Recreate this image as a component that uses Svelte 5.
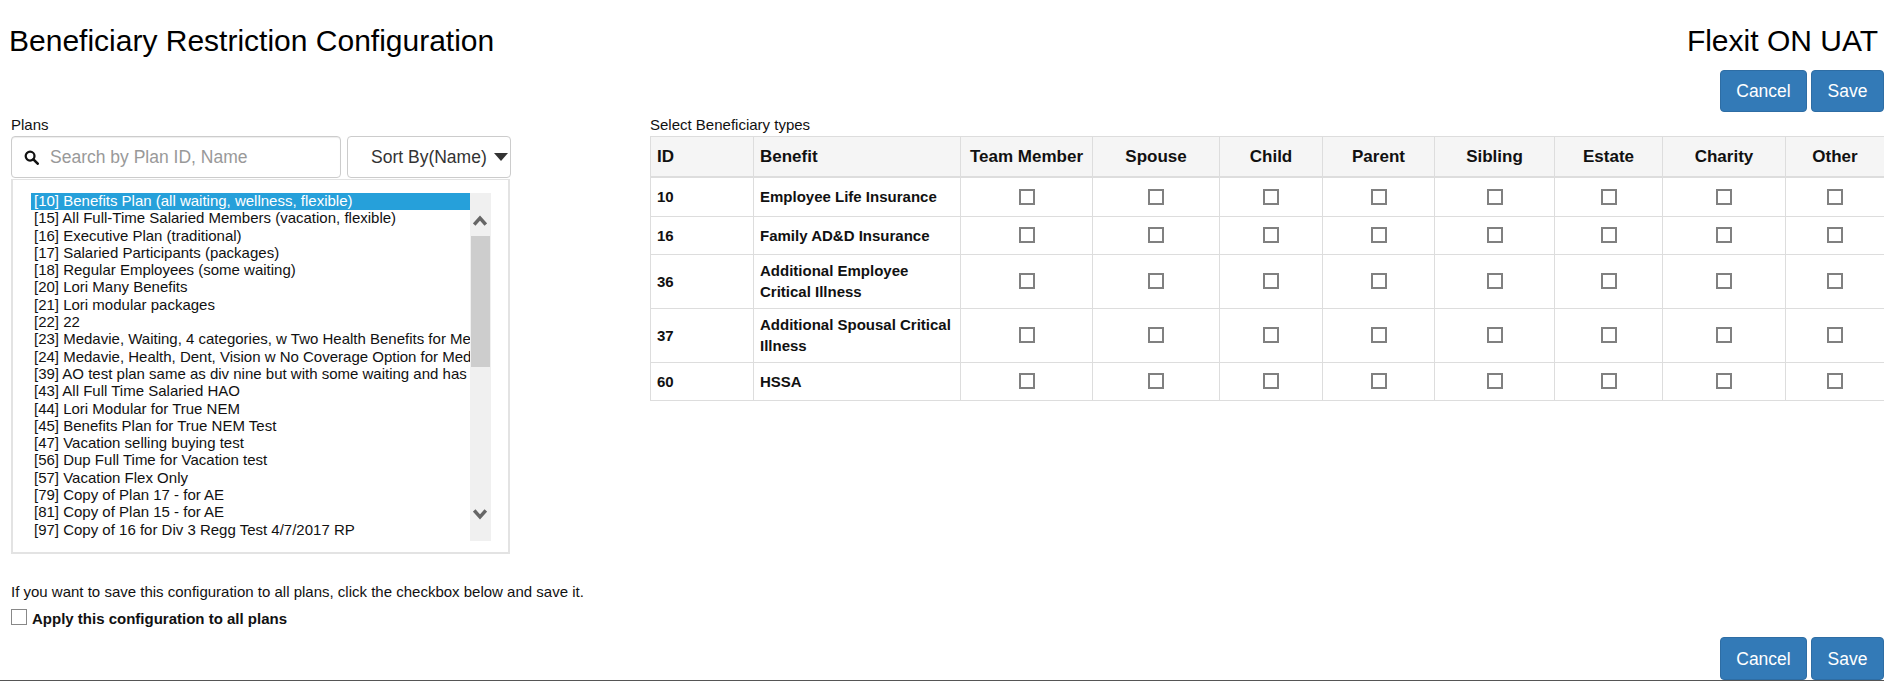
<script lang="ts">
	const plans = [
		'[10] Benefits Plan (all waiting, wellness, flexible)',
		'[15] All Full-Time Salaried Members (vacation, flexible)',
		'[16] Executive Plan (traditional)',
		'[17] Salaried Participants (packages)',
		'[18] Regular Employees (some waiting)',
		'[20] Lori Many Benefits',
		'[21] Lori modular packages',
		'[22] 22',
		'[23] Medavie, Waiting, 4 categories, w Two Health Benefits for Medical',
		'[24] Medavie, Health, Dent, Vision w No Coverage Option for Medical',
		'[39] AO test plan same as div nine but with some waiting and has flex',
		'[43] All Full Time Salaried HAO',
		'[44] Lori Modular for True NEM',
		'[45] Benefits Plan for True NEM Test',
		'[47] Vacation selling buying test',
		'[56] Dup Full Time for Vacation test',
		'[57] Vacation Flex Only',
		'[79] Copy of Plan 17 - for AE',
		'[81] Copy of Plan 15 - for AE',
		'[97] Copy of 16 for Div 3 Regg Test 4/7/2017 RP'
	];
	const types = ['Team Member', 'Spouse', 'Child', 'Parent', 'Sibling', 'Estate', 'Charity', 'Other'];
	const benefits = [
		{ id: 10, name: 'Employee Life Insurance', h: 39 },
		{ id: 16, name: 'Family AD&D Insurance', h: 38 },
		{ id: 36, name: 'Additional Employee Critical Illness', h: 54 },
		{ id: 37, name: 'Additional Spousal Critical Illness', h: 54 },
		{ id: 60, name: 'HSSA', h: 38 }
	];
</script>

<main class="page">
	<header class="top">
		<h1>Beneficiary Restriction Configuration</h1>
		<h1 class="client">Flexit ON UAT</h1>
	</header>

	<div class="actions first">
		<button class="btn">Cancel</button>
		<button class="btn">Save</button>
	</div>

	<div class="columns">
		<section class="left">
			<div class="label">Plans</div>
			<div class="tools">
				<div class="search">
					<svg viewBox="0 0 16 16" width="15" height="15">
						<circle cx="6.5" cy="6.5" r="4.7" fill="none" stroke="#111" stroke-width="2.4" />
						<path d="M10 10l4.6 4.6" stroke="#111" stroke-width="2.8" stroke-linecap="round" />
					</svg>
					<span class="placeholder">Search by Plan ID, Name</span>
				</div>
				<div class="sort">
					<span>Sort By(Name)</span>
					<i class="caret"></i>
				</div>
			</div>
			<div class="listbox">
				<div class="options">
					{#each plans as plan, i}
						<div class="option" class:selected={i === 0}>{plan}</div>
					{/each}
				</div>
				<div class="scrollbar">
					<svg class="arrow up" viewBox="0 0 14 11" width="14" height="11">
						<path d="M1.2 9.5L7 3l5.8 6.5" fill="none" stroke="#666" stroke-width="3.4" />
					</svg>
					<div class="thumb"></div>
					<svg class="arrow down" viewBox="0 0 14 11" width="14" height="11">
						<path d="M1.2 1.5L7 8l5.8-6.5" fill="none" stroke="#666" stroke-width="3.4" />
					</svg>
				</div>
			</div>
			<p class="hint">If you want to save this configuration to all plans, click the checkbox below and save it.</p>
			<label class="apply">
				<input type="checkbox" class="box light" />
				<span>Apply this configuration to all plans</span>
			</label>
		</section>

		<section class="right">
			<div class="label">Select Beneficiary types</div>
			<table>
				<colgroup>
					<col style="width: 103px" />
					<col style="width: 207px" />
					<col style="width: 132px" />
					<col style="width: 127px" />
					<col style="width: 103px" />
					<col style="width: 112px" />
					<col style="width: 120px" />
					<col style="width: 108px" />
					<col style="width: 123px" />
					<col style="width: 99px" />
				</colgroup>
				<thead>
					<tr>
						<th class="start">ID</th>
						<th class="start">Benefit</th>
						{#each types as type}
							<th>{type}</th>
						{/each}
					</tr>
				</thead>
				<tbody>
					{#each benefits as b}
						<tr style="height: {b.h}px">
							<td class="start">{b.id}</td>
							<td class="start">{b.name}</td>
							{#each types as type}
								<td class="check"><input type="checkbox" class="box" aria-label={type} /></td>
							{/each}
						</tr>
					{/each}
				</tbody>
			</table>
		</section>
	</div>

	<div class="actions last">
		<button class="btn">Cancel</button>
		<button class="btn">Save</button>
	</div>
</main>

<style>
	:global(body) {
		margin: 0;
		background: #fff;
	}
	.page {
		box-sizing: border-box;
		width: 1884px;
		height: 681px;
		overflow: hidden;
		display: flex;
		flex-direction: column;
		border-bottom: 1px solid #555;
		font-family: 'Liberation Sans', Arial, sans-serif;
		font-size: 15px;
		color: #111;
	}
	.top {
		display: flex;
		justify-content: space-between;
		padding: 24px 6px 0 9px;
	}
	h1 {
		margin: 0;
		font-size: 30px;
		font-weight: 400;
		line-height: 34px;
		color: #000;
	}
	.actions {
		display: flex;
		justify-content: flex-end;
		gap: 4px;
	}
	.actions.first {
		margin-top: 12px;
	}
	.actions.last {
		margin-top: auto;
	}
	.actions.last .btn {
		height: 43px;
	}
	.btn {
		box-sizing: border-box;
		height: 42px;
		padding: 1px 0 0;
		width: 87px;
		border: 1px solid #2e6da4;
		border-radius: 4px;
		background: #337ab7;
		color: #fff;
		font: 17.5px 'Liberation Sans', Arial, sans-serif;
	}
	.btn:last-child {
		width: 73px;
	}
	.columns {
		display: flex;
		margin-top: 5px;
	}
	.left {
		width: 500px;
		flex: none;
		margin-left: 11px;
	}
	.right {
		margin-left: 139px;
		flex: 1;
		min-width: 0;
	}
	.label {
		height: 19px;
		line-height: 16px;
	}
	.tools {
		display: flex;
		gap: 6px;
	}
	.search,
	.sort {
		box-sizing: border-box;
		height: 42px;
		display: flex;
		align-items: center;
		border: 1px solid #ccc;
		border-radius: 4px;
		font-size: 17.5px;
		box-shadow: inset 0 1px 1px rgba(0, 0, 0, 0.075);
	}
	.search {
		width: 330px;
		padding-left: 12px;
		gap: 11px;
	}
	.placeholder {
		color: #999;
	}
	.sort {
		width: 164px;
		padding-left: 23px;
		gap: 7px;
		color: #333;
		box-shadow: none;
	}
	.caret {
		border-left: 7.5px solid transparent;
		border-right: 7.5px solid transparent;
		border-top: 8px solid #333;
	}
	.listbox {
		box-sizing: border-box;
		width: 499px;
		height: 375px;
		margin-top: 1px;
		padding: 13px 17px 12px 18px;
		display: flex;
		border: 1px solid #e3e3e3;
		border-width: 1px 2px 2px 2px;
	}
	.options {
		width: 439px;
		height: 348px;
		overflow: hidden;
		white-space: nowrap;
	}
	.option {
		height: 17.3px;
		line-height: 15.5px;
		padding-left: 3px;
		color: #111;
	}
	.option.selected {
		background: #26a0da;
		color: #fff;
	}
	.scrollbar {
		position: relative;
		width: 21px;
		height: 348px;
		background: #f0f0f0;
	}
	.arrow {
		position: absolute;
		left: 3px;
	}
	.arrow.up {
		top: 22px;
	}
	.arrow.down {
		top: 316px;
	}
	.thumb {
		margin: 43px 1px 0 1px;
		height: 131px;
		background: #cdcdcd;
	}
	.hint {
		margin: 30px 0 0;
		line-height: 16px;
		white-space: nowrap;
	}
	.apply {
		display: flex;
		align-items: flex-start;
		gap: 5px;
		margin-top: 9px;
		font-weight: 700;
	}
	.apply span {
		margin-top: 2px;
		line-height: 16px;
	}
	.box {
		appearance: none;
		box-sizing: border-box;
		display: block;
		margin: 0 auto;
		width: 16px;
		height: 16px;
		border: 2px solid #808080;
		background: #fff;
	}
	.box.light {
		margin: 0;
		border-width: 1px;
		border-color: #888;
	}
	table {
		table-layout: fixed;
		width: 1234px;
		border-collapse: collapse;
		color: #111;
	}
	th,
	td {
		border: 1px solid #ddd;
		padding: 0 6px;
		font-weight: 700;
	}
	th {
		height: 39px;
		background: #f5f5f5;
		border-bottom: 2px solid #ddd;
		font-size: 17px;
		text-align: center;
		white-space: nowrap;
	}
	td {
		font-size: 15px;
		line-height: 21px;
	}
	.start {
		text-align: left;
	}
</style>
